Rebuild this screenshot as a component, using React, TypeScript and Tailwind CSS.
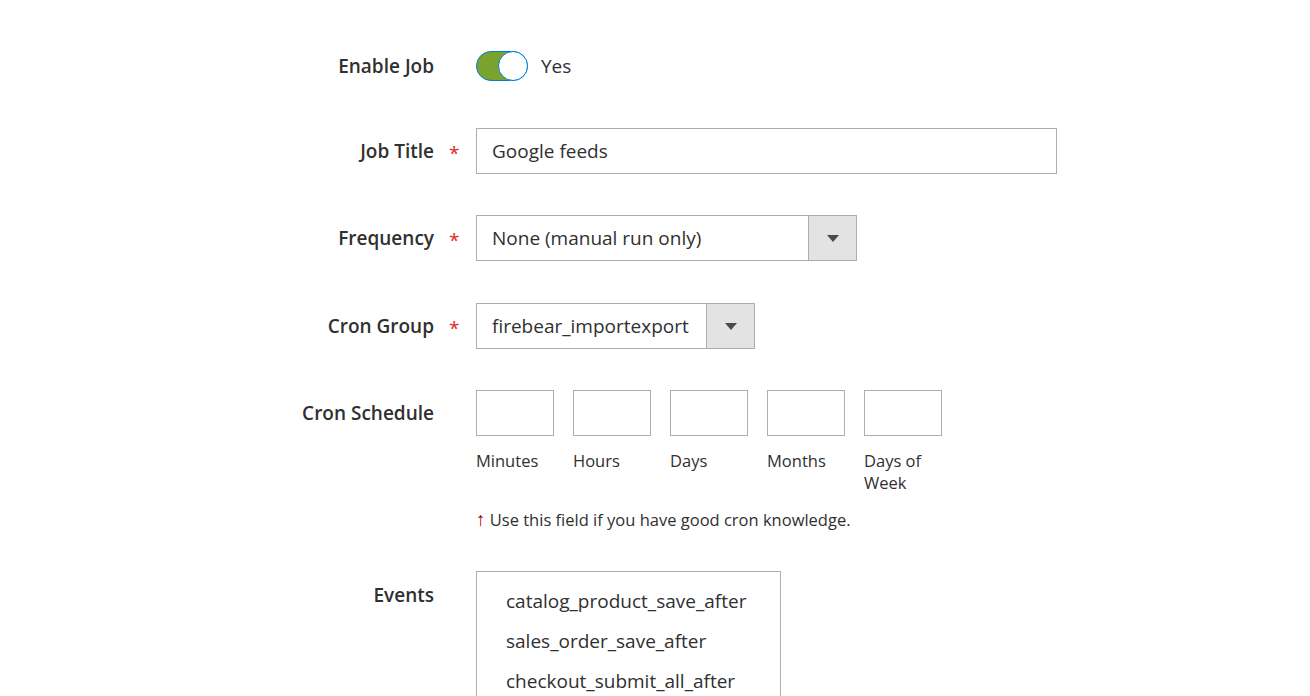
import React from "react";

const Star = () => <span className="text-[#e22626] text-[19px]">*</span>;

const Row: React.FC<{
  label: string;
  required?: boolean;
  className?: string;
  children: React.ReactNode;
}> = ({ label, required, className = "", children }) => (
  <div className={`flex items-center ${className}`}>
    <div className="w-[434px] shrink-0 text-right text-[19px] font-semibold text-[#303030]">
      {label}
    </div>
    <div className="w-[42px] shrink-0 pl-[15px] pt-[4px]">{required && <Star />}</div>
    {children}
  </div>
);

const Arrow = () => (
  <div className="w-[48px] self-stretch shrink-0 bg-[#e3e3e3] border-l border-[#adadad] flex items-center justify-center">
    <svg width="12" height="7" viewBox="0 0 12 7">
      <path d="M0 0 L12 0 L6 7 Z" fill="#514943" />
    </svg>
  </div>
);

const Select: React.FC<{ value: string; width: string }> = ({ value, width }) => (
  <div className={`${width} h-[46px] flex border border-[#adadad] bg-white`}>
    <div className="flex-1 flex items-center pl-[15px] text-[19px] text-[#303030]">{value}</div>
    <Arrow />
  </div>
);

const cronParts = ["Minutes", "Hours", "Days", "Months", "Days of Week"];
const events = ["catalog_product_save_after", "sales_order_save_after", "checkout_submit_all_after"];

export default function App() {
  return (
    <div className="min-h-screen bg-white pt-[51px] overflow-hidden" style={{ fontFamily: '"Open Sans", sans-serif' }}>
      <Row label="Enable Job">
        <div className="relative w-[52px] h-[30px] rounded-full bg-[#79a22e] border border-[#007bdb]">
          <div className="absolute right-[-1px] top-[-1px] w-[30px] h-[30px] rounded-full bg-white border border-[#007bdb]" />
        </div>
        <span className="ml-[13px] text-[19px] text-[#303030]">Yes</span>
      </Row>

      <Row label="Job Title" required className="mt-[47px]">
        <div className="w-[581px] h-[46px] border border-[#adadad] flex items-center pl-[15px] text-[19px] text-[#303030]">
          Google feeds
        </div>
      </Row>

      <Row label="Frequency" required className="mt-[41px]">
        <Select value="None (manual run only)" width="w-[381px]" />
      </Row>

      <Row label="Cron Group" required className="mt-[42px]">
        <Select value="firebear_importexport" width="w-[279px]" />
      </Row>

      <div className="flex items-start mt-[41px]">
        <div className="w-[434px] shrink-0 h-[46px] flex items-center justify-end text-[19px] font-semibold text-[#303030]">
          Cron Schedule
        </div>
        <div className="w-[42px] shrink-0" />
        <div>
          <div className="flex gap-[19px]">
            {cronParts.map((p) => (
              <div key={p} className="w-[78px]">
                <div className="h-[46px] border border-[#adadad]" />
                <div className="mt-[14px] text-[16.5px] leading-[22px] text-[#303030]">{p}</div>
              </div>
            ))}
          </div>
          <div className="mt-[14px] text-[16.5px] leading-[22px] text-[#303030]">
            <span className="text-[#b30000] text-[19px]">↑</span> Use this field if you have good cron knowledge.
          </div>
        </div>
      </div>

      <div className="flex items-start mt-[40px]">
        <div className="w-[434px] shrink-0 pt-[12px] text-right text-[19px] leading-[24px] font-semibold text-[#303030]">
          Events
        </div>
        <div className="w-[42px] shrink-0" />
        <div className="w-[305px] border border-[#adadad] pt-[9px] pb-[10px] pl-[29px]">
          {events.map((e) => (
            <div key={e} className="h-[40px] leading-[40px] text-[19px] text-[#303030]">{e}</div>
          ))}
        </div>
      </div>
    </div>
  );
}
